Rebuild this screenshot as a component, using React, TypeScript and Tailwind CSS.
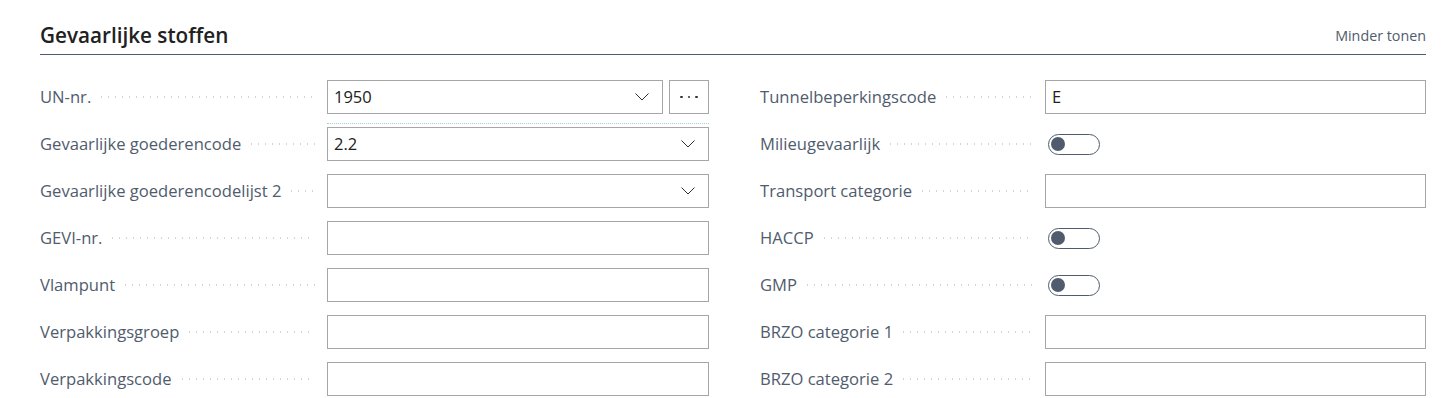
import React from 'react'

const font = { fontFamily: '"Segoe UI", "Open Sans", "Noto Sans", sans-serif' }

type Field =
  | { label: string; kind: 'text'; value?: string }
  | { label: string; kind: 'select'; value?: string; lookup?: boolean }
  | { label: string; kind: 'toggle' }

const left: Field[] = [
  { label: 'UN-nr.', kind: 'select', value: '1950', lookup: true },
  { label: 'Gevaarlijke goederencode', kind: 'select', value: '2.2' },
  { label: 'Gevaarlijke goederencodelijst 2', kind: 'select' },
  { label: 'GEVI-nr.', kind: 'text' },
  { label: 'Vlampunt', kind: 'text' },
  { label: 'Verpakkingsgroep', kind: 'text' },
  { label: 'Verpakkingscode', kind: 'text' },
]

const right: Field[] = [
  { label: 'Tunnelbeperkingscode', kind: 'text', value: 'E' },
  { label: 'Milieugevaarlijk', kind: 'toggle' },
  { label: 'Transport categorie', kind: 'text' },
  { label: 'HACCP', kind: 'toggle' },
  { label: 'GMP', kind: 'toggle' },
  { label: 'BRZO categorie 1', kind: 'text' },
  { label: 'BRZO categorie 2', kind: 'text' },
]

const Chevron = () => (
  <svg width="14" height="8" viewBox="0 0 14 8" fill="none" className="shrink-0">
    <path d="M0.5 0.5 L7 7 L13.5 0.5" stroke="#333" strokeWidth="1" />
  </svg>
)

const Toggle = () => (
  <div className="flex h-[21px] w-[52px] items-center rounded-full border-[1.5px] border-[#505c6d] bg-white px-[2px]">
    <div className="h-[14px] w-[14px] rounded-full bg-[#505c6d]" />
  </div>
)

const Value = ({ field }: { field: Field }) => {
  if (field.kind === 'toggle') {
    return (
      <div className="flex h-[34px] items-center pl-[3px]">
        <Toggle />
      </div>
    )
  }
  const box = (
    <div className="flex h-[34px] min-w-0 flex-1 items-center border border-[#a6a6a6] bg-white pl-[6px] pr-[13px] text-[16.5px] text-[#212121]">
      <span className="flex-1">{field.value}</span>
      {field.kind === 'select' && <Chevron />}
    </div>
  )
  if (field.kind === 'select' && field.lookup) {
    return (
      <div className="flex gap-[6px]">
        {box}
        <div className="flex h-[34px] w-[40px] items-center justify-center gap-[5px] border border-[#a6a6a6] bg-white">
          <span className="h-[2.5px] w-[2.5px] rounded-full bg-[#333]" />
          <span className="h-[2.5px] w-[2.5px] rounded-full bg-[#333]" />
          <span className="h-[2.5px] w-[2.5px] rounded-full bg-[#333]" />
        </div>
      </div>
    )
  }
  return <div className="flex">{box}</div>
}

const Row = ({ field, focused, labelWidth }: { field: Field; focused?: boolean; labelWidth: string }) => (
  <div className="relative flex items-center">
    <div className={`flex ${labelWidth} shrink-0 items-center pr-[12px]`}>
      <span className="whitespace-nowrap text-[16.6px] text-[#505c6d]">{field.label}</span>
      <span className="ml-[10px] h-[2px] flex-1 bg-[linear-gradient(to_right,#d4d4d4_1.5px,transparent_1.5px)] bg-[length:7px_2px] bg-repeat-x" />
    </div>
    <div className="min-w-0 flex-1">
      <Value field={field} />
    </div>
    {focused && (
      <div className="absolute right-0 bottom-[-10px] left-[287px] border-b border-dotted border-[#9fd3dc]" />
    )}
  </div>
)

export default function App() {
  return (
    <div className="min-h-[398px] bg-white pt-[21px] pr-[16px] pl-[40px]" style={font}>
      <div className="flex items-end justify-between border-b border-[#505c6d] pb-[5px]">
        <h2 className="text-[20.7px] font-semibold leading-[28px] text-[#212121]">Gevaarlijke stoffen</h2>
        <span className="pb-[3px] text-[14.3px] text-[#505c6d]">Minder tonen</span>
      </div>
      <div className="mt-[25px] flex gap-[51px]">
        <div className="flex w-[669px] flex-col gap-[13px]">
          {left.map((f, i) => (
            <Row key={f.label} field={f} focused={i === 0} labelWidth="w-[287px]" />
          ))}
        </div>
        <div className="flex flex-1 flex-col gap-[13px]">
          {right.map((f) => (
            <Row key={f.label} field={f} labelWidth="w-[285px]" />
          ))}
        </div>
      </div>
    </div>
  )
}
